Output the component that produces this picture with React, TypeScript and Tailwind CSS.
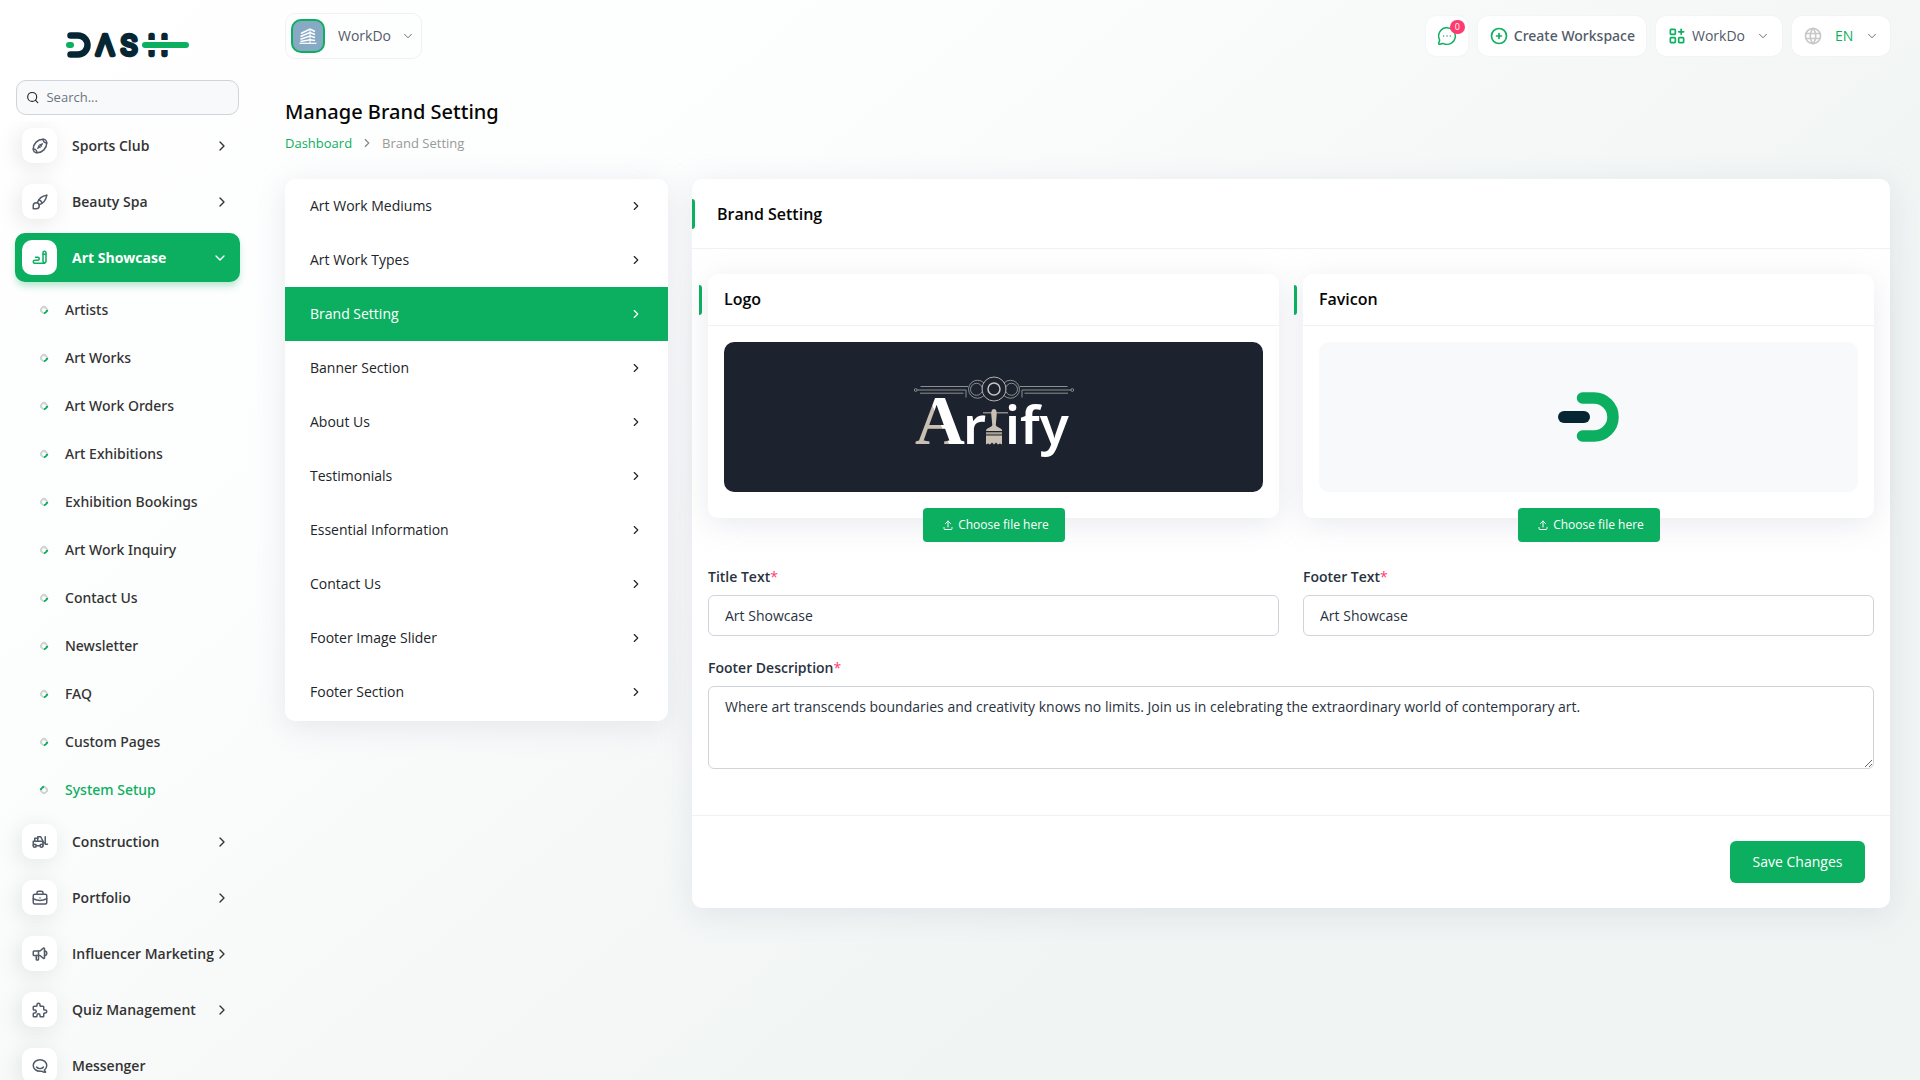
import { useState, type ReactNode } from "react";
import type { IconType } from "react-icons";
import {
  TbApps,
  TbBallAmericanFootball,
  TbBrandHipchat,
  TbBriefcase,
  TbBrush,
  TbCirclePlus,
  TbForklift,
  TbPuzzle,
  TbSpeakerphone,
  TbUpload,
  TbWorld,
  TbWriting,
} from "react-icons/tb";
import { ChevronDown, ChevronRight, MessageCircleMore, Search } from "lucide-react";

type MenuItem = {
  label: string;
  icon: IconType;
  active?: boolean;
  leaf?: boolean;
  children?: string[];
};

const MENU: MenuItem[] = [
  { label: "Sports Club", icon: TbBallAmericanFootball },
  { label: "Beauty Spa", icon: TbBrush },
  {
    label: "Art Showcase",
    icon: TbWriting,
    active: true,
    children: [
      "Artists",
      "Art Works",
      "Art Work Orders",
      "Art Exhibitions",
      "Exhibition Bookings",
      "Art Work Inquiry",
      "Contact Us",
      "Newsletter",
      "FAQ",
      "Custom Pages",
      "System Setup",
    ],
  },
  { label: "Construction", icon: TbForklift },
  { label: "Portfolio", icon: TbBriefcase },
  { label: "Influencer Marketing", icon: TbSpeakerphone },
  { label: "Quiz Management", icon: TbPuzzle },
  { label: "Messenger", icon: TbBrandHipchat, leaf: true },
];

const ACTIVE_CHILD = "System Setup";

const SETTINGS = [
  "Art Work Mediums",
  "Art Work Types",
  "Brand Setting",
  "Banner Section",
  "About Us",
  "Testimonials",
  "Essential Information",
  "Contact Us",
  "Footer Image Slider",
  "Footer Section",
];

function DashLogo() {
  return (
    <svg width="124" height="40" viewBox="0 -6 124 40" role="img" aria-label="DASH">
      <path d="M4.5 4.5H12a9.5 9.5 0 0 1 0 19H4.5" fill="none" stroke="#062634" strokeWidth="6.5" strokeLinecap="round" />
      <rect x="0" y="11" width="8" height="6" rx="3" fill="#0CAF60" />
      <g
        fill="#062634"
        stroke="#062634"
        strokeWidth="4.5"
        strokeLinejoin="round"
        fontFamily="Inter, sans-serif"
        fontSize="27"
        fontWeight="300"
        textAnchor="middle"
      >
        <text x="39" y="24">Λ</text>
        <text x="63" y="24">S</text>
        <text x="92" y="24">H</text>
      </g>
      <rect x="76" y="9" width="48" height="10" fill="#fff" />
      <rect x="76" y="11" width="47" height="6" rx="3" fill="#0CAF60" />
    </svg>
  );
}

function FaviconMark() {
  return (
    <svg width="62" height="50" viewBox="0 0 62 50" aria-hidden="true">
      <path d="M24.5 6H36a19 19 0 0 1 0 38H24.5" fill="none" stroke="#0CAF60" strokeWidth="11.5" strokeLinecap="round" />
      <rect x="0" y="19" width="32" height="12" rx="6" fill="#062634" />
    </svg>
  );
}

function ArtifyLogo() {
  return (
    <svg width="160" height="88" viewBox="0 -3 160 88" role="img" aria-label="Artify">
      <defs>
        {/* hard stop along the edge of the heavy stroke */}
        <linearGradient id="letter" gradientUnits="userSpaceOnUse" x1="20.5" y1="35" x2="29.7" y2="31">
          <stop offset="0" stopColor="#c9bfb2" />
          <stop offset="0.05" stopColor="#fff" />
        </linearGradient>
      </defs>
      <g fill="none" stroke="#8d8e90" strokeWidth="1">
        <circle cx="80" cy="13" r="12" stroke="#b5b2ae" />
        <circle cx="80" cy="13" r="6" stroke="#c9c6c2" strokeWidth="1.5" />
        <path d="M70 7a9 9 0 1 0 0 12.5M90 7a9 9 0 1 1 0 12.5" />
        <circle cx="62.5" cy="13.3" r="6" />
        <circle cx="97.5" cy="13.3" r="6" />
        <circle cx="1.7" cy="14" r="1.4" />
        <circle cx="158.3" cy="14" r="1.4" />
        <path d="M6.5 10.5H54M3 14H52V21.5M6 17.2H49.5" />
        <path d="M153.5 10.5H106M157 14H108V21.5M154 17.2H110.5" />
      </g>
      <text x="1" y="68" fill="url(#letter)" fontFamily="'Liberation Serif', serif" fontSize="69" fontWeight="700">A</text>
      <g fill="#fff" fontFamily="'Noto Sans', sans-serif" fontSize="53" fontWeight="600">
        <text x="49" y="68">r</text>
        <text x="91" y="68">ify</text>
      </g>
      {/* paint brush standing in for the t */}
      <path d="M69 36.8H94" stroke="#a9a196" strokeWidth="1.2" />
      <path d="M80 33c2.500 0 3 3 2.600 7l-.8 9c.2 2.500 6.400 2.500 6.400 6H72c0-3.500 6.200-3.500 6.300-6l-.9-9c-.4-4 .1-7 2.600-7z" fill="#c9bfb2" />
      <path d="M72 56.200h16v2.300H72z" fill="#a9a094" />
      <path d="M72 59.500h16V68.500l-2-1-2 1-2-2-2 2-2-2-2 2-2-1-2 1z" fill="#c9bfb2" />
    </svg>
  );
}

function BuildingIcon() {
  return (
    <svg width="20" height="20" viewBox="0 0 20 20" fill="none" stroke="#fff" strokeWidth="1.5" aria-hidden="true">
      <path d="M3 7.500 12 3l5 2.500M2.500 10.500l9.500-4 5 2M2.500 13.200 12 10l5 1.500M2.500 15.500 12 13.800l5 .7" />
      <path d="M12 3v14" strokeWidth="1" />
      <path d="M1.500 17.300h17" strokeWidth="1.2" />
    </svg>
  );
}

function SidebarLink({ item }: { item: MenuItem }) {
  const Icon = item.icon;
  const Arrow = item.active ? ChevronDown : ChevronRight;

  return (
    <a
      href="#"
      className={
        item.active
          ? "flex h-[49px] items-center rounded-[10px] bg-[#0CAF60] pl-[7px] pr-3 text-sm font-bold text-white shadow-[0_5px_7px_-1px_rgba(12,175,96,0.3)]"
          : "flex h-[49px] items-center rounded-[10px] pl-[7px] pr-[10px] text-sm font-semibold text-[#333]"
      }
    >
      <span
        className={
          item.active
            ? "flex size-[35px] shrink-0 items-center justify-center rounded-[10px] bg-white text-[#0CAF60]"
            : "flex size-[35px] shrink-0 items-center justify-center rounded-[10px] bg-white text-[#525b69] shadow-[-3px_4px_23px_rgba(0,0,0,0.1)]"
        }
      >
        <Icon size={18} />
      </span>
      <span className="ml-[15px] flex-1 whitespace-nowrap">{item.label}</span>
      {!item.leaf && <Arrow size={16} />}
    </a>
  );
}

function Sidebar() {
  return (
    <aside className="sticky top-0 flex h-screen w-[255px] shrink-0 flex-col overflow-hidden px-[15px] pt-[25px]">
      <a href="#" className="flex justify-center">
        <DashLogo />
      </a>
      <label className="mx-px mt-[15px] flex h-[35px] shrink-0 items-center gap-[7px] rounded-[10px] border border-[#ced4da] bg-[#f8f9fa] px-[9px] text-[#212529]">
        <Search size={15} aria-label="Search" />
        <input placeholder="Search..." className="w-full bg-transparent text-[13px] outline-none placeholder:text-[#6c757d]" />
      </label>

      <nav className="-mx-[15px] mt-[6px] min-h-0 flex-1 overflow-hidden px-[15px]">
        <ul>
          {MENU.map((item) => (
            <li key={item.label} className={item.children ? "" : "mb-[7px]"}>
              <SidebarLink item={item} />
              {item.children && (
                <ul className="pb-[3px] pt-1">
                  {item.children.map((child) => (
                    <li key={child}>
                      <a
                        href="#"
                        className={
                          child === ACTIVE_CHILD
                            ? "flex h-12 items-center gap-[17px] pl-[25px] font-['Noto_Sans',sans-serif] text-sm font-medium text-[#0CAF60]"
                            : "flex h-12 items-center gap-[17px] pl-[25px] font-['Noto_Sans',sans-serif] text-sm font-medium text-[#333]"
                        }
                      >
                        <span
                          className={
                            child === ACTIVE_CHILD
                              ? "size-2 rotate-135 rounded-full border-2 border-[#ced4d4] border-b-[#0CAF60]"
                              : "size-2 -rotate-45 rounded-full border-2 border-[#ced4d4] border-b-[#0CAF60]"
                          }
                        />
                        {child}
                      </a>
                    </li>
                  ))}
                </ul>
              )}
            </li>
          ))}
        </ul>
      </nav>
    </aside>
  );
}

function TopBar() {
  return (
    <header className="flex items-center justify-between pt-[13px]">
      <button type="button" className="flex h-[46px] items-center rounded-[10px] border border-[#f1f1f1] px-[5px] text-sm text-[#525b69]">
        <span className="flex size-[34px] items-center justify-center rounded-[10px] border-2 border-[#0CAF60] bg-[#87a9c4]">
          <BuildingIcon />
        </span>
        <span className="ml-[13px]">WorkDo</span>
        <ChevronDown size={14} strokeWidth={1.5} className="ml-[10px] mr-px" />
      </button>

      <div className="flex gap-[10px] text-sm text-[#525b69]">
        <button type="button" aria-label="Messages" className="relative flex h-10 w-[42px] items-center justify-center rounded-[10px] bg-white text-[#0CAF60] shadow-[0_0_2px_rgba(0,0,0,0.06)]">
          <MessageCircleMore size={20} strokeWidth={1.75} />
          <span className="absolute right-[3px] top-1 flex h-[14px] w-[15px] items-center justify-center rounded-full bg-[#ff3a6e] text-[9px] text-white">
            0
          </span>
        </button>
        <button type="button" className="flex h-10 items-center gap-[5px] rounded-[10px] bg-white px-[11px] shadow-[0_0_2px_rgba(0,0,0,0.06)]">
          <TbCirclePlus size={20} className="text-[#0CAF60]" />
          <span className="font-['Noto_Sans',sans-serif] font-medium">Create Workspace</span>
        </button>
        <button type="button" className="flex h-10 items-center gap-[5px] rounded-[10px] bg-white px-[11px] shadow-[0_0_2px_rgba(0,0,0,0.06)]">
          <TbApps size={20} className="text-[#0CAF60]" />
          WorkDo
          <ChevronDown size={14} strokeWidth={1.5} className="ml-[6px] mr-px" />
        </button>
        <label className="flex h-10 items-center rounded-[10px] bg-white px-[11px] shadow-[0_0_2px_rgba(0,0,0,0.06)]">
          <TbWorld size={20} className="text-[#c8c8c8]" aria-label="Language" />
          <select defaultValue="EN" className="ml-3 appearance-none bg-transparent text-[#0CAF60] outline-none">
            <option>EN</option>
          </select>
          <ChevronDown size={14} strokeWidth={1.5} className="ml-[11px]" />
        </label>
      </div>
    </header>
  );
}

function UploadCard({ title, dark, children }: { title: string; dark?: boolean; children: ReactNode }) {
  return (
    <div className="flex h-[244px] flex-col items-center rounded-[10px] bg-white shadow-[0_6px_30px_rgba(182,186,203,0.3)]">
      <div className="relative w-full border-b border-[#f1f1f1] px-4 py-[13px]">
        <span className="absolute -left-[9px] top-[11px] h-[30px] w-[3px] rounded-r-[3px] bg-[#0CAF60]" />
        <h5 className="text-base/[25px] font-semibold text-[#060606]">{title}</h5>
      </div>
      <div className="w-full px-4 pt-4">
        <div
          className={
            dark
              ? "flex h-[150px] items-center justify-center rounded-[10px] bg-[#1c232f]"
              : "flex h-[150px] items-center justify-center rounded-[10px] bg-[#f8f9fa]"
          }
        >
          {children}
        </div>
      </div>
      <label className="mt-4 flex h-[34px] w-[142px] shrink-0 items-center justify-center gap-1 rounded bg-[#0CAF60] pl-1 text-xs font-medium text-white">
        <TbUpload size={12} />
        Choose file here
        <input type="file" className="hidden" />
      </label>
    </div>
  );
}

function Required() {
  return <span className="font-normal text-[#ff3a6e]">*</span>;
}

export default function App() {
  const [titleText, setTitleText] = useState("Art Showcase");
  const [footerText, setFooterText] = useState("Art Showcase");
  const [description, setDescription] = useState(
    "Where art transcends boundaries and creativity knows no limits. Join us in celebrating the extraordinary world of contemporary art."
  );

  return (
    <div className="flex min-h-screen bg-[linear-gradient(141deg,#ffffff_0%,#fcfdfd_30%,#f0f4f3_70%,#f0f4f3_100%)] font-['Open_Sans',sans-serif] text-sm text-[#293240]">
      <Sidebar />

      <main className="min-w-0 flex-1 px-[30px] pb-[30px]">
        <TopBar />

        <h4 className="mt-[38px] font-['Noto_Sans',sans-serif] text-xl/[30px] font-medium text-[#060606]">Manage Brand Setting</h4>
        <nav className="mt-[6px] flex items-center gap-2 text-[13px]/5">
          <a href="#" className="text-[#0CAF60]">Dashboard</a>
          <ChevronRight size={14} className="text-[#888]" />
          <span className="text-[#999]">Brand Setting</span>
        </nav>

        <div className="mt-[26px] flex items-start gap-6">
          <nav className="w-[383px] shrink-0 overflow-hidden rounded-[10px] bg-white pb-0.5 shadow-[0_6px_30px_rgba(182,186,203,0.3)]">
            {SETTINGS.map((label) => (
              <a
                key={label}
                href="#"
                className={
                  label === "Brand Setting"
                    ? "flex h-[54px] items-center justify-between bg-[#0CAF60] px-[25px] text-white"
                    : "flex h-[54px] items-center justify-between px-[25px] text-[#212529]"
                }
              >
                {label}
                <ChevronRight size={14} />
              </a>
            ))}
          </nav>

          <form className="min-w-0 flex-1 rounded-[10px] bg-white shadow-[0_6px_30px_rgba(182,186,203,0.3)]" onSubmit={(e) => e.preventDefault()}>
            <div className="flex h-[70px] items-center border-b border-[#f1f1f1]">
              <span className="h-[30px] w-[3px] rounded-r-[3px] bg-[#0CAF60]" />
              <h5 className="ml-[22px] text-base font-semibold text-[#060606]">Brand Setting</h5>
            </div>

            <div className="px-4 pb-[46px] pt-[25px]">
              <div className="grid grid-cols-2 gap-x-6">
                <UploadCard title="Logo" dark>
                  <ArtifyLogo />
                </UploadCard>
                <UploadCard title="Favicon">
                  <FaviconMark />
                </UploadCard>

                <div className="mt-12">
                  <label htmlFor="title-text" className="block text-sm/[21px] font-semibold">
                    Title Text
                    <Required />
                  </label>
                  <input
                    id="title-text"
                    value={titleText}
                    onChange={(e) => setTitleText(e.target.value)}
                    className="mt-2 h-[41px] w-full rounded-md border border-[#ced4da] bg-white px-4 text-sm outline-none"
                  />
                </div>
                <div className="mt-12">
                  <label htmlFor="footer-text" className="block text-sm/[21px] font-semibold">
                    Footer Text
                    <Required />
                  </label>
                  <input
                    id="footer-text"
                    value={footerText}
                    onChange={(e) => setFooterText(e.target.value)}
                    className="mt-2 h-[41px] w-full rounded-md border border-[#ced4da] bg-white px-4 text-sm outline-none"
                  />
                </div>
              </div>

              <label htmlFor="footer-description" className="mt-[21px] block text-sm/[21px] font-semibold">
                Footer Description
                <Required />
              </label>
              <textarea
                id="footer-description"
                value={description}
                onChange={(e) => setDescription(e.target.value)}
                className="mt-2 block h-[83px] w-full rounded-md border border-[#ced4da] bg-white px-4 py-[9px] text-sm/[21px] outline-none"
              />
            </div>

            <div className="flex justify-end border-t border-[#f1f1f1] p-[25px]">
              <button type="submit" className="h-[42px] w-[135px] rounded-md bg-[#0CAF60] text-sm font-medium text-white">
                Save Changes
              </button>
            </div>
          </form>
        </div>
      </main>
    </div>
  );
}
